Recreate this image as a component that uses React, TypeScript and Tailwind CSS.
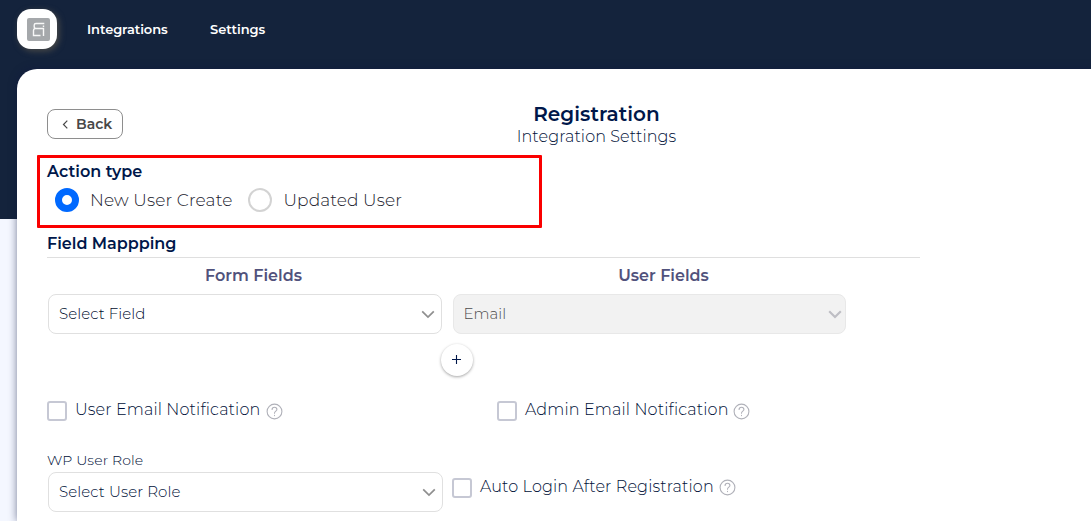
import React from "react";

function HelpIcon({ className = "" }: { className?: string }) {
  return (
    <svg className={`shrink-0 ${className}`} width="17" height="17" viewBox="0 0 17 17" fill="none" stroke="#b0b1b9" strokeWidth="1.100" strokeLinecap="round">
      <circle cx="8.500" cy="8.500" r="7.400" />
      <path d="M6.100 6.500C6.100 5.100 7.100 4.200 8.500 4.200s2.400.9 2.400 2.200c0 1.800-2.400 1.800-2.400 3.900M8.500 12.400v.2" />
    </svg>
  );
}

function Checkbox({ className = "" }: { className?: string }) {
  return <span className={`h-5 w-5 shrink-0 rounded-[3px] border-2 border-[#c6c8d4] bg-white ${className}`} />;
}

function Chevron({ color = "#8f8f8f", weight = 1.7 }: { color?: string; weight?: number }) {
  return (
    <svg width="14" height="9" viewBox="0 0 14 9" fill="none" stroke={color} strokeWidth={weight}>
      <path d="M1.200 1.300L7 7.100l5.800-5.800" />
    </svg>
  );
}

export default function App() {
  return (
    <div className="h-[521px] w-full overflow-hidden whitespace-nowrap bg-[linear-gradient(#14233c_219px,#f4f7ff_219px)] font-['Montserrat','Inter',sans-serif] text-[#00174a]">
      <header className="flex h-[69px] items-start pl-[17px]">
        <div className="mt-[9px] flex h-10 w-10 items-center justify-center rounded-[14px] bg-white shadow-[2px_2px_6px_#4b4b48]">
          <svg className="ml-[3px] mt-[1px]" width="23" height="23" viewBox="0 0 23 23" fill="none">
            <rect width="23" height="23" rx="2" fill="#a5a8ab" />
            <path d="M17.300 5.500H9Q7.200 5.500 7.200 7V8.500Q7.200 10.500 9 10.500H16.500V18M7.800 10.500Q6.500 11 6.500 12.500V17.500H13.500M16.500 7.400V9" stroke="#f8f8f8" strokeWidth="1.400" />
          </svg>
        </div>
        <nav className="mt-5 flex text-[13px] leading-[18px] font-semibold text-white">
          <a className="ml-[30px] w-[123px] tracking-[-0.07px]">Integrations</a>
          <a className="tracking-[-0.04px]">Settings</a>
        </nav>
      </header>

      <main className="h-[452px] ml-[17px] rounded-tl-[20px] bg-white pl-[30px] pt-[34px] shadow-[0_0_8px_#0f16408c]">
        <div className="flex h-[52px]">
          <button className="mt-[6px] flex h-[30px] w-[76px] items-center rounded-[8px] border border-[#8e8e8e] pl-[14px] text-[14px] font-semibold text-[#484848]">
            <svg width="7" height="9" viewBox="0 0 7 9" fill="none" stroke="#484848" strokeWidth="1.200">
              <path d="M5.300 0.700L1.500 4.500L5.300 8.300" />
            </svg>
            <span className="ml-[7px]">Back</span>
          </button>
          <div className="flex w-[947px] flex-col items-center">
            <h1 className="h-[22px] text-[20px] leading-[22px] font-semibold tracking-[0.05px]">Registration</h1>
            <p className="mt-px h-[22px] text-[16px] leading-[22px] font-light tracking-[0.1px] text-[#001038]">Integration Settings</p>
          </div>
        </div>

        <section className="-ml-[10px] h-[73px] w-[505px] rounded-[1px] border-[3px] border-[#fa0000] pl-[7px] pt-[4px]">
          <h2 className="text-[16px] leading-[20px] font-semibold tracking-[0.05px]">Action type</h2>
          <div className="mt-[6px] flex h-6 items-center pl-2 text-[17px] leading-6 font-light text-[#22222e]">
            <span className="h-6 w-6 rounded-full border-[7px] border-[#0069ff] bg-white" />
            <span className="ml-[11px] w-[158px] tracking-[0.13px]">New User Create</span>
            <span className="h-6 w-6 rounded-full border-2 border-[#d3d3d3]" />
            <span className="ml-[11.5px] tracking-[0.1px]">Updated User</span>
          </div>
        </section>

        <section>
          <h2 className="h-[30px] w-[873px] border-b border-[#dfdfdf] pt-[6px] text-[16px] leading-[20px] font-semibold">Field Mappping</h2>
          <div className="flex h-9 items-center text-[16px] font-semibold text-[#51527c]">
            <span className="w-[413px] text-center">Form Fields</span>
            <span className="w-[407px] text-center">User Fields</span>
          </div>
          <div className="flex gap-[11px] pl-px text-[15px] font-light">
            <div className="flex h-10 w-[394px] items-center justify-between rounded-[8px] border border-[#e0e0e0] pl-[10px] pr-[6px] text-[#000c2c]">
              <span className="tracking-[0.07px]">Select Field</span>
              <Chevron />
            </div>
            <div className="flex h-10 w-[393px] items-center justify-between rounded-[8px] border border-[#e8e8e8] bg-[#f2f2f2] pl-[10px] pr-[3px] text-[#4c4c4c]">
              <span className="-ml-[0.5px]">Email</span>
              <Chevron color="#bebec4" weight={2.1} />
            </div>
          </div>
          <button className="ml-[394px] mt-[10px] flex h-8 w-8 items-center justify-center rounded-full bg-white shadow-[0_1px_3px_#a5a5a5]">
            <svg className="-mt-px -ml-px" width="9" height="9" viewBox="0 0 9 9" stroke="#00174a" strokeWidth="1.100">
              <path d="M0 4.500h9M4.500 0v9" />
            </svg>
          </button>
        </section>

        <section className="mt-[23px] flex h-6 text-[16px] leading-[22px] font-light text-[#001038]">
          <div className="flex w-[450px]">
            <Checkbox className="mt-[2px]" />
            <span className="ml-2 w-[191px] tracking-[0.14px]">User Email Notification</span>
            <HelpIcon className="mt-[4px]" />
          </div>
          <div className="flex">
            <Checkbox className="mt-[2px]" />
            <span className="ml-2 w-[208px] tracking-[0.15px]">Admin Email Notification</span>
            <HelpIcon className="mt-[4px]" />
          </div>
        </section>

        <section className="mt-[27px] flex font-light text-[#001038]">
          <div>
            <label className="block h-[22px] text-[14px] leading-[20px] tracking-[0.12px]">WP User Role</label>
            <div className="ml-px flex h-10 w-[395px] items-center justify-between rounded-[8px] border border-[#e0e0e0] pl-[10px] pr-[6px] text-[15px]">
              <span className="tracking-[0.1px]">Select User Role</span>
              <Chevron />
            </div>
          </div>
          <div className="ml-[9px] mt-[25px] flex text-[16px] leading-[24px]">
            <Checkbox className="mt-[3px]" />
            <span className="ml-2 w-[239px] tracking-[0.13px]">Auto Login After Registration</span>
            <HelpIcon className="mt-[4px]" />
          </div>
        </section>
      </main>
    </div>
  );
}
